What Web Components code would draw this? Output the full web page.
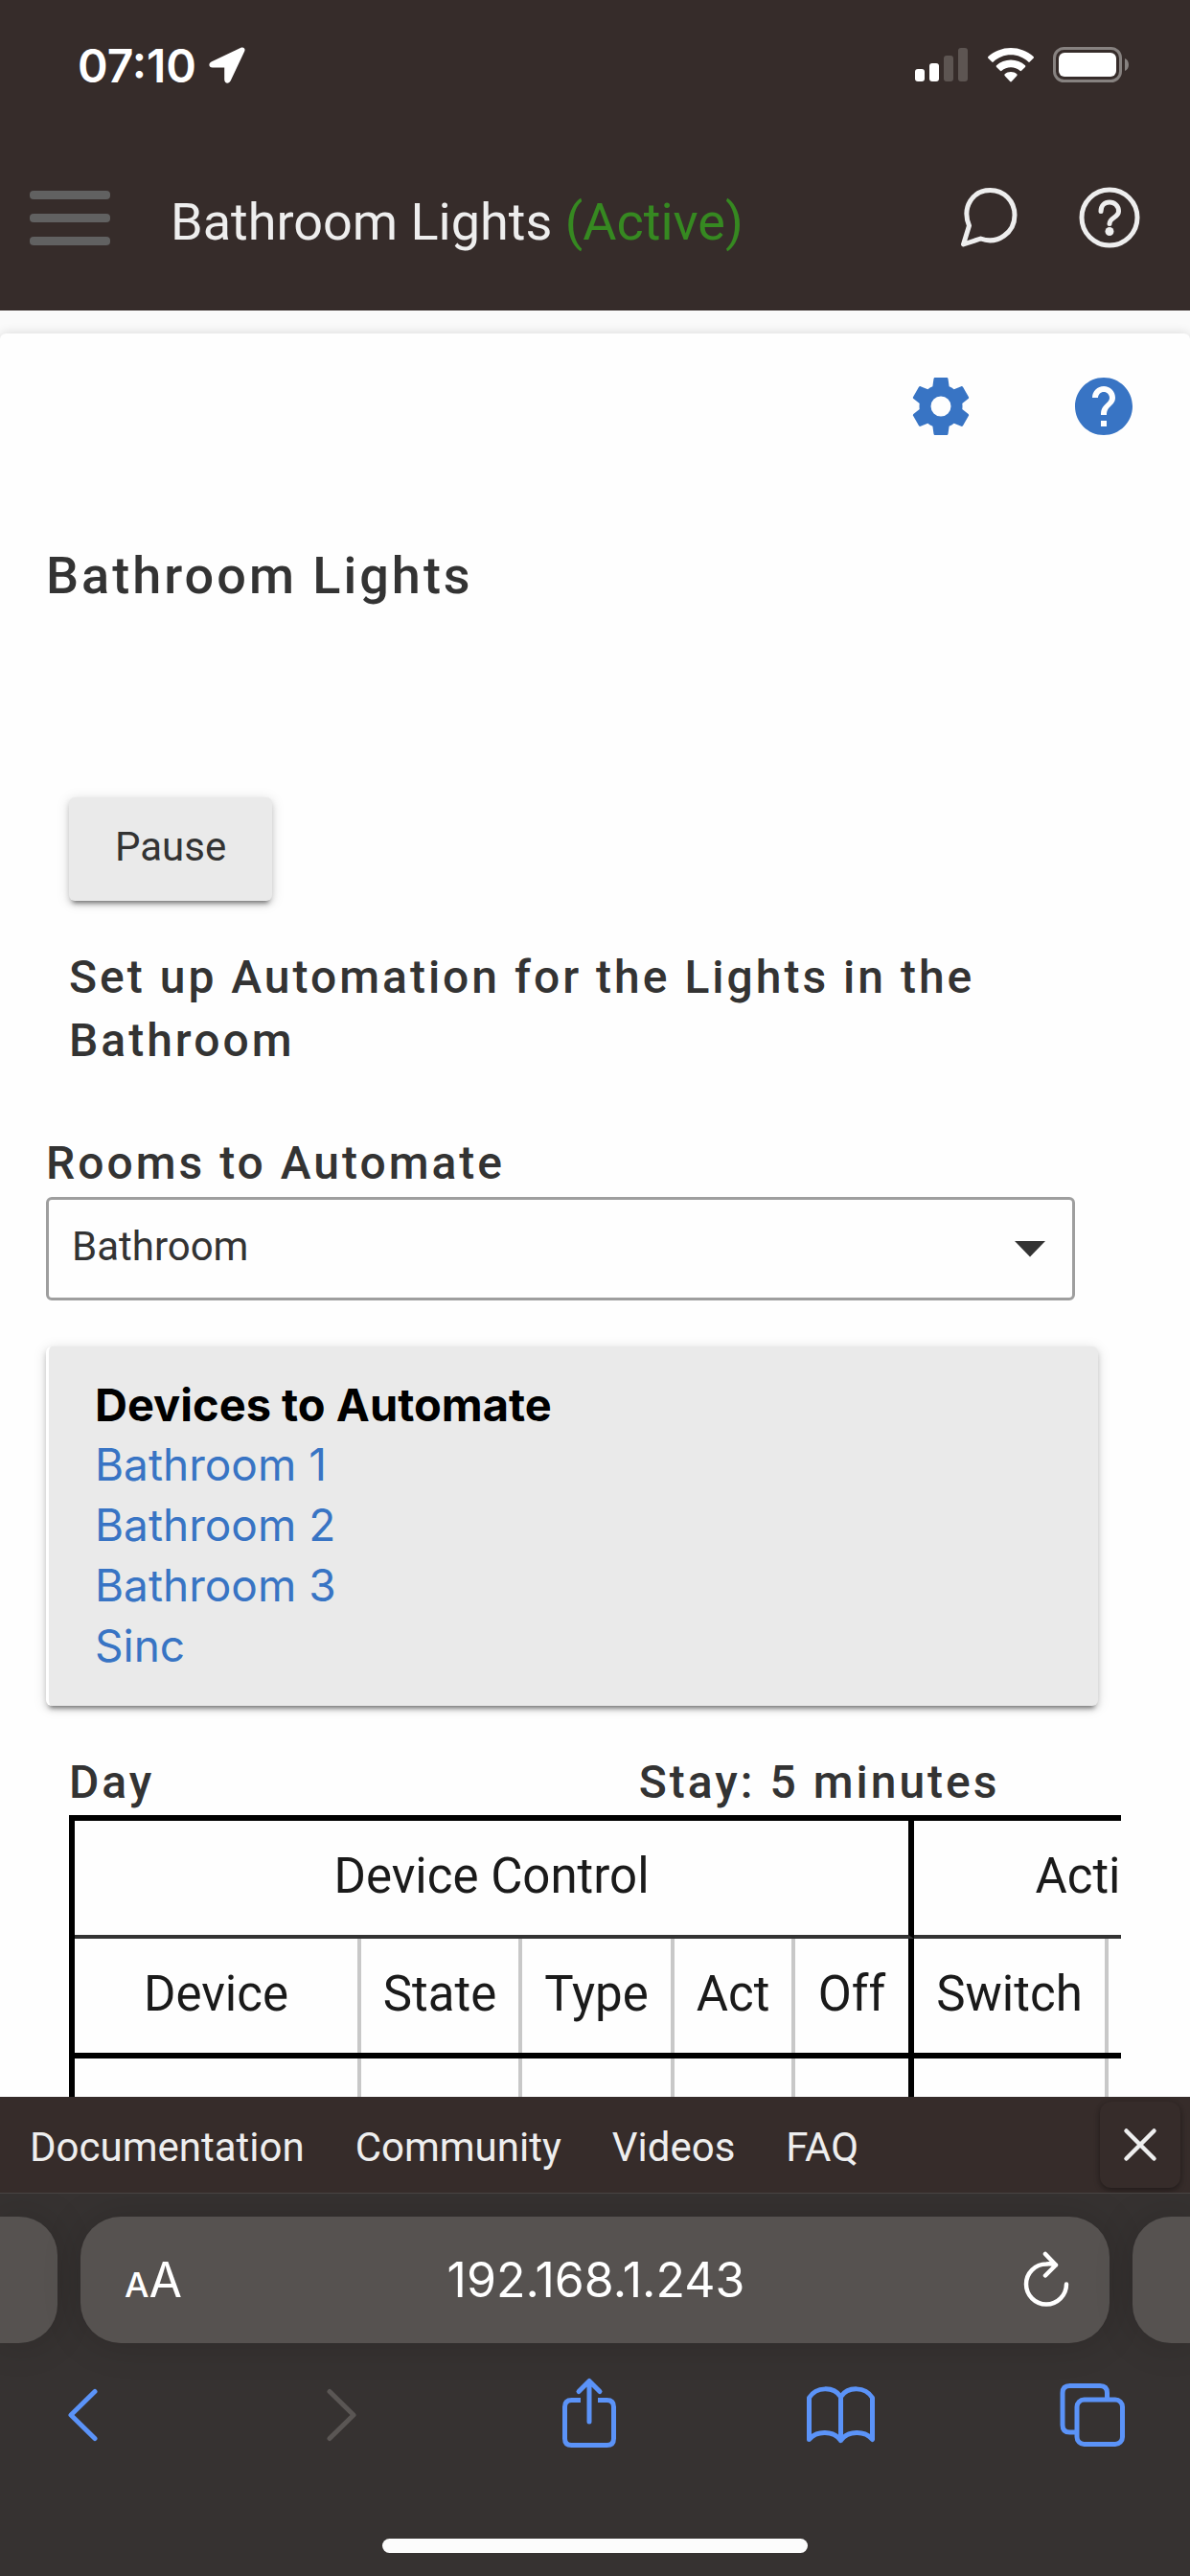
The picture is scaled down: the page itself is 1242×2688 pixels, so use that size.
<!DOCTYPE html>
<html lang="en">
<head>
<meta charset="utf-8">
<meta name="viewport" content="width=device-width, initial-scale=1">
<title>Bathroom Lights</title>
<style>
  :root {
    --brown: #362c2a;
    --ink: #333333;
    --link: #3874c4;
    --tint: #5b93f8;
    --pale: #eeeeee;
    --panel: #eaeaea;
    --heading-tracking: 3px;
    --lift: 0 6px 4px -4px rgba(0,0,0,.4), 0 4px 6px rgba(0,0,0,.16), 0 2px 14px rgba(0,0,0,.13);
  }
  body { margin: 0; background: #fafafa; color: var(--ink); font-family: Roboto, "Liberation Sans", sans-serif; }
</style>
</head>
<body>
<phone-screen>
  <status-bar slot="top" time="07:10"></status-bar>
  <app-header slot="top">Bathroom Lights <span slot="state">(Active)</span></app-header>
  <page-card>
    <card-tools></card-tools>
    <app-title>Bathroom Lights</app-title>
    <pause-button>Pause</pause-button>
    <section-heading class="inset">Set up Automation for the Lights in the Bathroom</section-heading>
    <room-select label="Rooms to Automate">Bathroom</room-select>
    <device-panel heading="Devices to Automate">
      <device-link>Bathroom 1</device-link>
      <device-link>Bathroom 2</device-link>
      <device-link>Bathroom 3</device-link>
      <device-link>Sinc</device-link>
    </device-panel>
    <mode-schedule>
      <section-heading slot="mode">Day</section-heading>
      <section-heading slot="stay">Stay: 5 minutes</section-heading>
    </mode-schedule>
  </page-card>
  <page-footer slot="bottom"></page-footer>
  <browser-bar slot="bottom" address="192.168.1.243"></browser-bar>
</phone-screen>

<script>
  function define(name, markup, setup) {
    customElements.define(name, class extends HTMLElement {
      constructor() {
        super();
        const template = document.createElement('template');
        template.innerHTML = '<style>*{box-sizing:border-box}svg{display:block}' +
          'button{font:inherit;color:inherit;background:none;border:0;padding:0;margin:0}</style>' + markup;
        this.attachShadow({ mode: 'open' }).append(template.content.cloneNode(true));
      }
      connectedCallback() { if (setup) setup(this, this.shadowRoot); }
    });
  }

  define('phone-screen', `
    <style>
      :host { display: flex; flex-direction: column; height: 100vh; overflow: hidden; }
      main { flex: 1; min-height: 0; overflow: hidden; padding-top: 24px; }
    </style>
    <slot name="top"></slot>
    <main><slot></slot></main>
    <slot name="bottom"></slot>`);

  define('status-bar', `
    <style>
      :host { display: flex; align-items: center; justify-content: space-between; height: 136px;
        padding: 0 64px 0 81px; box-sizing: border-box; background: var(--brown); color: #fff;
        font: 600 48px Inter, sans-serif; }
      div { display: flex; align-items: center; }
      .left { gap: 13px; } .right { gap: 20px; }
    </style>
    <div class="left"><time></time>
      <svg width="38" height="38" viewBox="0 0 38 38" fill="#fff"><path d="M33.5 .8 3 15.2C-.8 17-.4 21.4 3.8 21.4H16.2V34c0 4.400 4.800 4.900 6.500 1.200L37.200 4.500C38.400 1.800 36.200-.4 33.500.8Z"/></svg>
    </div>
    <div class="right">
      <svg width="56" height="36" viewBox="0 0 56 36" fill="#fff"><rect y="22" width="10" height="13" rx="3"/><rect x="15" y="16" width="10" height="19" rx="3"/><g fill="#5d5552"><rect x="30" y="8" width="10" height="27" rx="3"/><rect x="45" width="10" height="35" rx="3"/></g></svg>
      <svg width="48" height="36" viewBox="0 0 48 36" fill="#fff"><path d="M24 0C33 0 41.500 3.400 47.600 9.100c.5.5.5 1.100 0 1.600l-3.800 3.800c-.5.5-1.100.5-1.600 0C37.300 10 31 7.300 24 7.300S10.700 10 5.800 14.500c-.5.5-1.100.5-1.600 0L.4 10.700c-.5-.5-.5-1.100 0-1.600C6.500 3.400 15 0 24 0Z"/><path d="M24 12.500c5.700 0 11 2.200 15 5.800.5.5.5 1.100 0 1.600l-3.900 3.900c-.5.500-1.100.500-1.600 0-2.500-2.200-5.800-3.600-9.500-3.600s-7 1.400-9.500 3.600c-.5.500-1.100.500-1.600 0L9 19.900c-.5-.5-.5-1.100 0-1.600 4-3.600 9.300-5.800 15-5.800Z"/><path d="M24 25c2.400 0 4.600.9 6.300 2.300.5.500.5 1.100.1 1.600L24.800 35c-.5.500-1.100.500-1.600 0l-5.600-6.100c-.4-.5-.4-1.100.1-1.600C19.400 25.900 21.600 25 24 25Z"/></svg>
      <svg width="79" height="38" viewBox="0 0 79 38"><rect x="1.500" y="1.500" width="69" height="34" rx="10" fill="none" stroke="#878280" stroke-width="3"/><rect x="6" y="6" width="60" height="25" rx="6" fill="#fff"/><path d="M75 12c5.300 2 5.300 11 0 13Z" fill="#878280"/></svg>
    </div>`, (el, root) => { root.querySelector('time').textContent = el.getAttribute('time'); });

  define('app-header', `
    <style>
      :host { display: block; background: var(--brown); color: var(--pale); }
      header { display: flex; align-items: center; height: 188px; padding: 0 51px 6px 30px; }
      h1 { flex: 1; margin: 0; padding: 10px 0 0 62px; font-size: 54px; font-weight: 400; line-height: 64px; }
      ::slotted([slot=state]) { color: #368921; }
      nav { display: flex; gap: 60px; }
    </style>
    <header>
      <button aria-label="Menu"><svg width="86" height="60" viewBox="0 0 86 60" fill="#616161"><rect x="1" y="2" width="84" height="9" rx="4"/><rect x="1" y="26" width="84" height="9" rx="4"/><rect x="1" y="50" width="84" height="9" rx="4"/></svg></button>
      <h1><slot></slot><slot name="state"></slot></h1>
      <nav>
        <button aria-label="Chat"><svg width="66" height="66" viewBox="0 0 66 66" fill="none" stroke="#eeeeee" stroke-width="5" stroke-linejoin="round"><path d="M6.500 61 12.500 41.500C4.500 22 16.500 4.500 34.500 4.500 49 4.500 60 16 60 30.500 60 49 42 61.500 24.500 55Z"/></svg></button>
        <button aria-label="Help"><svg width="66" height="66" viewBox="0 0 66 66" fill="none" stroke="#eeeeee" stroke-width="5" stroke-linecap="round"><circle cx="33" cy="33" r="29"/><path d="M24 26.500C24 20.500 28 17 33 17s9.500 3.500 9.500 9.500C42.500 33 33 33 33 39.500"/><circle cx="33" cy="47.500" r="4.500" fill="#eeeeee" stroke="none"/></svg></button>
      </nav>
    </header>`);

  define('page-card', `
    <style>
      :host { display: block; min-height: 100%; padding: 40px 0 0 48px; box-sizing: border-box;
        background: #fefefe; border-radius: 6px; box-shadow: 0 0 12px rgba(0,0,0,.14); }
      ::slotted(app-title) { margin-top: 105px; }
      ::slotted(pause-button) { margin: 195px 0 0 24px; }
      ::slotted(.inset) { margin: 47px 120px 0 24px; }
      ::slotted(room-select) { margin: 62px 120px 0 0; }
      ::slotted(device-panel) { margin: 48px 96px 0 0; }
      ::slotted(mode-schedule) { margin: 47px 72px 0 24px; }
    </style><slot></slot>`);

  define('card-tools', `
    <style>
      :host { display: flex; justify-content: flex-end; gap: 98px; padding-right: 54px; color: var(--link); }
    </style>
    <button aria-label="Settings"><svg width="72" height="72" viewBox="0 0 24 24" fill="currentColor"><path d="M12,15.500A3.500,3.500 0 0,1 8.500,12A3.500,3.500 0 0,1 12,8.500A3.500,3.500 0 0,1 15.500,12A3.500,3.500 0 0,1 12,15.500M19.430,12.970C19.470,12.650 19.500,12.330 19.500,12C19.500,11.670 19.470,11.340 19.430,11L21.540,9.370C21.730,9.220 21.780,8.950 21.660,8.730L19.660,5.270C19.540,5.050 19.270,4.960 19.050,5.050L16.560,6.050C16.040,5.660 15.500,5.320 14.870,5.070L14.500,2.420C14.460,2.180 14.250,2 14,2H10C9.750,2 9.540,2.180 9.500,2.420L9.130,5.070C8.500,5.320 7.960,5.660 7.440,6.050L4.950,5.050C4.730,4.960 4.460,5.050 4.340,5.270L2.340,8.730C2.210,8.950 2.270,9.220 2.460,9.370L4.570,11C4.530,11.340 4.500,11.670 4.500,12C4.500,12.330 4.530,12.650 4.570,12.970L2.460,14.630C2.270,14.780 2.210,15.050 2.340,15.270L4.340,18.730C4.460,18.950 4.730,19.030 4.950,18.950L7.440,17.940C7.960,18.340 8.500,18.680 9.130,18.930L9.500,21.580C9.540,21.820 9.750,22 10,22H14C14.250,22 14.460,21.820 14.500,21.580L14.870,18.930C15.500,18.670 16.040,18.340 16.560,17.940L19.050,18.950C19.270,19.030 19.540,18.950 19.660,18.730L21.660,15.270C21.780,15.050 21.730,14.780 21.540,14.630L19.430,12.970Z"/></svg></button>
    <button aria-label="Help"><svg width="72" height="72" viewBox="0 0 24 24" fill="currentColor"><path d="M12 2C6.480 2 2 6.480 2 12s4.480 10 10 10 10-4.480 10-10S17.520 2 12 2zm1 17h-2v-2h2v2zm2.070-7.750l-.9.920C13.450 12.900 13 13.500 13 15h-2v-.5c0-1.100.45-2.100 1.170-2.830l1.240-1.260c.37-.36.59-.86.59-1.410 0-1.100-.9-2-2-2s-2 .9-2 2H8c0-2.210 1.790-4 4-4s4 1.790 4 4c0 .88-.36 1.680-.93 2.250z"/></svg></button>`);

  define('app-title', `
    <style>:host { display: block; } h2 { margin: 0; font-size: 54px; font-weight: 500; line-height: 72px; letter-spacing: var(--heading-tracking); }</style>
    <h2><slot></slot></h2>`);

  define('section-heading', `
    <style>:host { display: block; } h3 { margin: 0; font-size: 48px; font-weight: 500; line-height: 66px; letter-spacing: var(--heading-tracking); }</style>
    <h3><slot></slot></h3>`);

  define('pause-button', `
    <style>
      :host { display: block; }
      button { display: block; height: 108px; padding: 0 48px 6px; font-size: 42px; border-radius: 6px;
        background: var(--panel); box-shadow: var(--lift); }
    </style>
    <button><slot></slot></button>`);

  define('room-select', `
    <style>
      :host { display: block; }
      label { display: block; padding-bottom: 2px; font-size: 48px; font-weight: 500; line-height: 66px; letter-spacing: var(--heading-tracking); }
      div { display: grid; align-items: center; }
      select { grid-area: 1 / 1; appearance: none; width: 100%; height: 108px; padding: 0 24px 5px;
        border: 3px solid #9e9e9e; border-radius: 6px; background: transparent;
        font: 42px Roboto, "Liberation Sans", sans-serif; color: var(--ink); }
      svg { grid-area: 1 / 1; justify-self: end; margin-right: 30px; pointer-events: none; }
    </style>
    <label for="room"></label>
    <div>
      <select id="room"><option></option></select>
      <svg width="34" height="18" viewBox="0 0 34 18"><path d="M1 1H33L17 17.500Z" fill="#333"/></svg>
    </div>`, (el, root) => {
      root.querySelector('label').textContent = el.getAttribute('label');
      root.querySelector('option').textContent = el.textContent.trim();
    });

  define('device-panel', `
    <style>
      :host { display: block; padding: 29px 48px 31px 48px; border-left: 3px solid #fff; border-radius: 6px;
        box-sizing: border-box; background: var(--panel); box-shadow: var(--lift);
        font: 46px Inter, sans-serif; line-height: 63px; }
      strong { display: block; color: #000; font-size: 47px; font-weight: 700; }
    </style>
    <strong></strong><slot></slot>`, (el, root) => {
      root.querySelector('strong').textContent = el.getAttribute('heading');
    });

  define('device-link', `
    <style>:host { display: block; } a { color: var(--link); text-decoration: none; }</style>
    <a href="#"><slot></slot></a>`);

  define('mode-schedule', `
    <style>
      :host { display: block; }
      .head { display: grid; grid-template-columns: 13fr 11fr; }
      .scroll { overflow: hidden; padding-top: 1px; }
      table { table-layout: fixed; width: 1236px; border-spacing: 0; border: 6px solid #000; font-size: 51px; line-height: 60px; color: #1a1a1a; }
      .device { width: 299px; } .state { width: 168px; } .type { width: 159px; } .act { width: 126px; }
      .off { width: 124px; } .switch { width: 203px; }
      th, td { font-weight: 400; padding: 0 4px 0 0; text-align: center;
        background: linear-gradient(#c8c8c8, #c8c8c8) right / 4px 100% no-repeat; }
      th { height: 125px; padding-bottom: 4px; border-bottom: 6px solid #000; }
      .group th { height: 123px; border-bottom: 4px solid #333; }
      .group th, .end { padding-right: 0; border-right: 6px solid #000; background: none; }
      td { height: 125px; }
    </style>
    <div class="head"><slot name="mode"></slot><slot name="stay"></slot></div>
    <div class="scroll">
      <table>
        <colgroup><col class="device"><col class="state"><col class="type"><col class="act"><col class="off"><col class="switch"><col></colgroup>
        <thead>
          <tr class="group"><th colspan="5">Device Control</th><th colspan="2">Acti</th></tr>
          <tr><th>Device</th><th>State</th><th>Type</th><th>Act</th><th class="end">Off</th><th>Switch</th><th></th></tr>
        </thead>
        <tbody><tr><td></td><td></td><td></td><td></td><td class="end"></td><td></td><td></td></tr></tbody>
      </table>
    </div>`);

  define('page-footer', `
    <style>
      :host { display: block; background: var(--brown); color: var(--pale); }
      footer { display: flex; align-items: center; justify-content: space-between; height: 100px; padding: 0 10px 0 31px; font-size: 42px; }
      nav { display: flex; gap: 53px; padding-top: 4px; }
      a { color: inherit; text-decoration: none; }
      button { display: grid; place-items: center; width: 84px; height: 90px; border-radius: 12px;
        box-shadow: 0 3px 6px rgba(0,0,0,.3), 0 0 5px rgba(0,0,0,.12); }
    </style>
    <footer>
      <nav><a href="#">Documentation</a><a href="#">Community</a><a href="#">Videos</a><a href="#">FAQ</a></nav>
      <button aria-label="Close"><svg width="36" height="36" viewBox="0 0 36 36" stroke="#eeeeee" stroke-width="4.500" stroke-linecap="round"><path d="M3.500 3.500 32.500 32.500M32.500 3.500 3.500 32.500"/></svg></button>
    </footer>`);

  define('browser-bar', `
    <style>
      :host { display: flex; flex-direction: column; align-items: center; height: 400px; padding: 24px 0; box-sizing: border-box;
        background: #363231; border-top: 1px solid #484443; color: #fff; overflow: hidden; }
      .tabs { display: flex; gap: 24px; align-self: stretch; height: 132px; }
      .tab { background: #565250; width: 60px; box-shadow: 0 0 40px rgba(0,0,0,.16); }
      .prev { border-radius: 0 40px 40px 0; } .next { border-radius: 40px 0 0 40px; }
      .current { flex: 1; display: flex; align-items: center; justify-content: space-between; padding: 0 42px 0 46px; border-radius: 42px;
        font: 50px Inter, sans-serif; }
      input { flex: 1; min-width: 0; width: 0; padding: 0 14px 0 0; border: 0; background: none; color: inherit; font: inherit; text-align: center; }
      .size { width: 60px; white-space: nowrap; } .size small { font-size: 36px; font-weight: 500; }
      nav { display: flex; justify-content: space-between; align-self: stretch; padding: 30px 66px 0 48px; }
      nav svg { overflow: visible; fill: none; stroke: var(--tint); stroke-width: 5; stroke-linecap: round; stroke-linejoin: round; }
      nav .off { stroke: #5a5654; }
      .home { width: 444px; height: 15px; border-radius: 8px; background: #fcfcfc; margin-top: auto; }
    </style>
    <div class="tabs">
      <div class="tab prev"></div>
      <div class="tab current">
        <button class="size" aria-label="Text size"><small>A</small>A</button>
        <input aria-label="Address">
        <button aria-label="Reload"><svg width="48" height="60" viewBox="0 0 48 60" fill="none" stroke="#fff" stroke-width="4.500" stroke-linecap="round" stroke-linejoin="round"><path d="M45 34.500A21 21 0 1 1 24 13.500C28 13 31 13.500 34 14.500M23 3 34 14.500 23 25.500"/></svg></button>
      </div>
      <div class="tab next"></div>
    </div>
    <nav>
      <button aria-label="Back"><svg width="72" height="84" viewBox="0 0 72 84"><path d="M51 20.500 26 45 51 69.500"/></svg></button>
      <button aria-label="Forward" disabled><svg class="off" width="72" height="84" viewBox="0 0 72 84"><path d="M32 20.500 57 45 32 69.500"/></svg></button>
      <button aria-label="Share"><svg width="72" height="84" viewBox="0 0 72 84"><path d="M39 52V10M28 20.500 39 9.500 50 20.500"/><path style="stroke-linecap:butt" d="M30 29.500H20.500Q13.500 29.500 13.500 36.500V69.500Q13.500 76.500 20.500 76.500H57.500Q64.500 76.500 64.500 69.500V36.500Q64.500 29.500 57.500 29.500H48"/></svg></button>
      <button aria-label="Bookmarks"><svg width="72" height="84" viewBox="0 0 72 84"><path d="M37.500 71.500V26C30 15 12 15 4.500 27V70.500C12 61 30 61 37.500 71.500C45 61 63 61 70.500 70.500V27C63 15 45 15 37.500 26"/></svg></button>
      <button aria-label="Tabs"><svg width="72" height="84" viewBox="0 0 72 84"><path style="stroke-linecap:butt" d="M19 63H12.500Q5 63 5 55.500V22Q5 14.500 12.500 14.500H44Q51.500 14.500 51.500 22V28"/><rect x="20" y="29" width="47.500" height="46.500" rx="7.500"/></svg></button>
    </nav>
    <div class="home"></div>`, (el, root) => { root.querySelector('input').value = el.getAttribute('address'); });
</script>
</body>
</html>
